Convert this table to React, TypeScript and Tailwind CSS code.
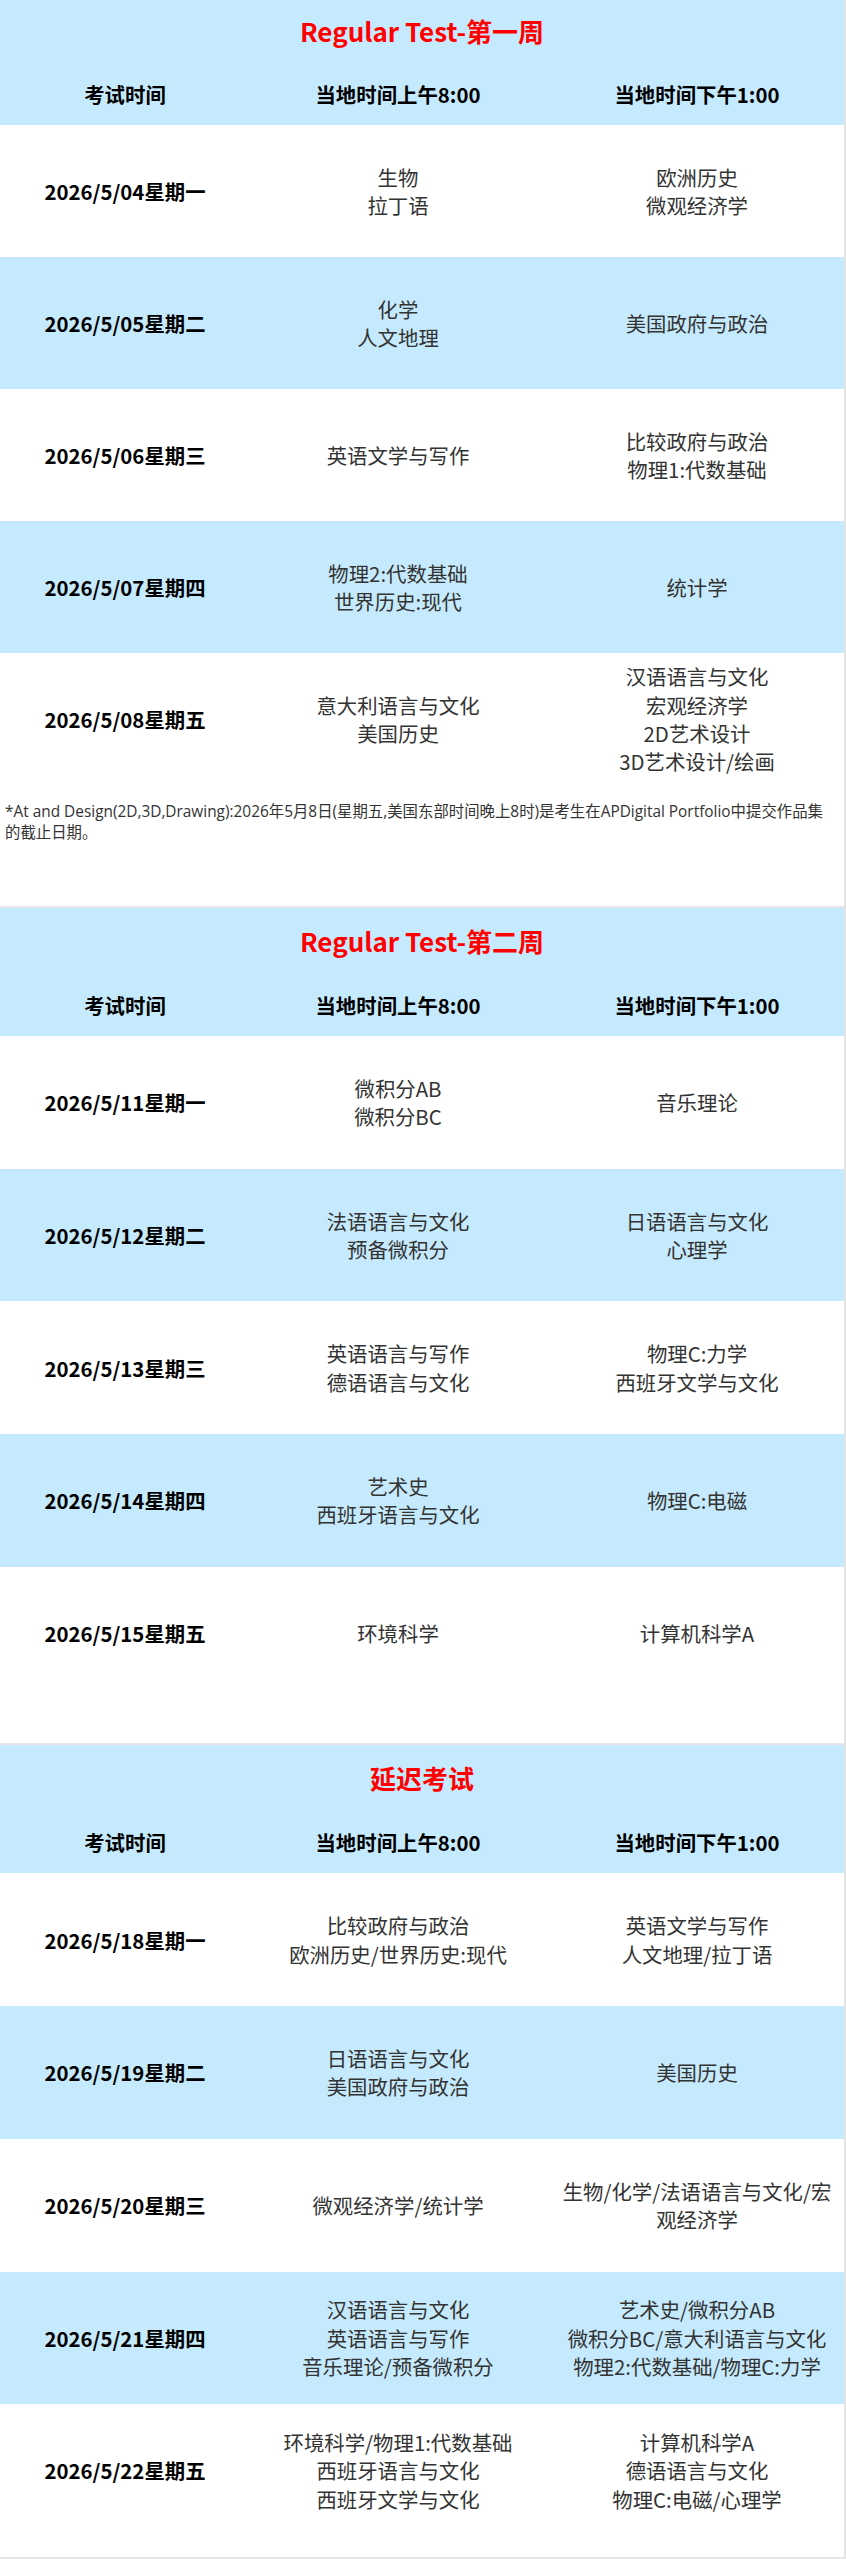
import React from "react";

type Row = { date: string; am: string[]; pm: string[] };

const week1: Row[] = [
  { date: "2026/5/04星期一", am: ["生物", "拉丁语"], pm: ["欧洲历史", "微观经济学"] },
  { date: "2026/5/05星期二", am: ["化学", "人文地理"], pm: ["美国政府与政治"] },
  { date: "2026/5/06星期三", am: ["英语文学与写作"], pm: ["比较政府与政治", "物理1:代数基础"] },
  { date: "2026/5/07星期四", am: ["物理2:代数基础", "世界历史:现代"], pm: ["统计学"] },
  {
    date: "2026/5/08星期五",
    am: ["意大利语言与文化", "美国历史"],
    pm: ["汉语语言与文化", "宏观经济学", "2D艺术设计", "3D艺术设计/绘画"],
  },
];

const week2: Row[] = [
  { date: "2026/5/11星期一", am: ["微积分AB", "微积分BC"], pm: ["音乐理论"] },
  { date: "2026/5/12星期二", am: ["法语语言与文化", "预备微积分"], pm: ["日语语言与文化", "心理学"] },
  { date: "2026/5/13星期三", am: ["英语语言与写作", "德语语言与文化"], pm: ["物理C:力学", "西班牙文学与文化"] },
  { date: "2026/5/14星期四", am: ["艺术史", "西班牙语言与文化"], pm: ["物理C:电磁"] },
  { date: "2026/5/15星期五", am: ["环境科学"], pm: ["计算机科学A"] },
];

const late: Row[] = [
  { date: "2026/5/18星期一", am: ["比较政府与政治", "欧洲历史/世界历史:现代"], pm: ["英语文学与写作", "人文地理/拉丁语"] },
  { date: "2026/5/19星期二", am: ["日语语言与文化", "美国政府与政治"], pm: ["美国历史"] },
  { date: "2026/5/20星期三", am: ["微观经济学/统计学"], pm: ["生物/化学/法语语言与文化/宏", "观经济学"] },
  {
    date: "2026/5/21星期四",
    am: ["汉语语言与文化", "英语语言与写作", "音乐理论/预备微积分"],
    pm: ["艺术史/微积分AB", "微积分BC/意大利语言与文化", "物理2:代数基础/物理C:力学"],
  },
  {
    date: "2026/5/22星期五",
    am: ["环境科学/物理1:代数基础", "西班牙语言与文化", "西班牙文学与文化"],
    pm: ["计算机科学A", "德语语言与文化", "物理C:电磁/心理学"],
  },
];

const Lines = ({ items }: { items: string[] }) => (
  <div className="flex flex-col items-center text-[#333] whitespace-nowrap">
    {items.map((t) => (
      <span key={t}>{t}</span>
    ))}
  </div>
);

const Header = ({ title, first }: { title: string; first?: boolean }) => (
  <div className="bg-[#c6eafd]">
    <div
      className={
        first
          ? "h-[63px] flex items-center justify-center text-[26px] font-bold text-[#ff0000]"
          : "h-[66px] flex items-center justify-center text-[26px] font-bold text-[#ff0000]"
      }
    >
      {title}
    </div>
    <div className="h-[62px] grid grid-cols-[250px_296px_298px] items-center font-bold text-black">
      <div className="text-center">考试时间</div>
      <div className="text-center">当地时间上午8:00</div>
      <div className="text-center pl-[4px]">当地时间下午1:00</div>
    </div>
  </div>
);

const Table = ({ rows, first }: { rows: Row[]; first?: boolean }) => (
  <div>
    {rows.map((r, i) => (
      <div
        key={r.date}
        className={
          (first ? "h-[132px] " : "h-[132.7px] ") +
          (i % 2 === 1 ? "bg-[#c6eafd] " : "bg-white ") +
          "grid grid-cols-[250px_296px_298px] items-center"
        }
      >
        <div className="text-center font-bold text-black">{r.date}</div>
        <Lines items={r.am} />
        <div className="pl-[4px]">
          <Lines items={r.pm} />
        </div>
      </div>
    ))}
  </div>
);

export default function App() {
  return (
    <div className="w-[846px] bg-white border-r-2 border-[#e3e3e3] [font-family:'Noto_Sans_CJK_SC','Noto_Sans',sans-serif] text-[20.4px] leading-[28.4px]">
      <section className="border-b-2 border-[#e6e6e6] pb-[63px]">
        <Header title="Regular Test-第一周" first />
        <Table rows={week1} first />
        <p className="mt-[16px] pl-[5px] pr-[2px] whitespace-nowrap [font-family:'Open_Sans','Noto_Sans_CJK_SC',sans-serif] text-[15.4px] leading-[21px] text-[#333]">
          *At and Design(2D,3D,Drawing):2026年5月8日(星期五,美国东部时间晚上8时)是考生在APDigital Portfolio中提交作品集
          <br />
          的截止日期。
        </p>
      </section>
      <section className="border-b-2 border-[#e6e6e6] pb-[44px]">
        <Header title="Regular Test-第二周" />
        <Table rows={week2} />
      </section>
      <section className="border-b-2 border-[#e6e6e6] pb-[20px]">
        <Header title="延迟考试" />
        <Table rows={late} />
      </section>
    </div>
  );
}
